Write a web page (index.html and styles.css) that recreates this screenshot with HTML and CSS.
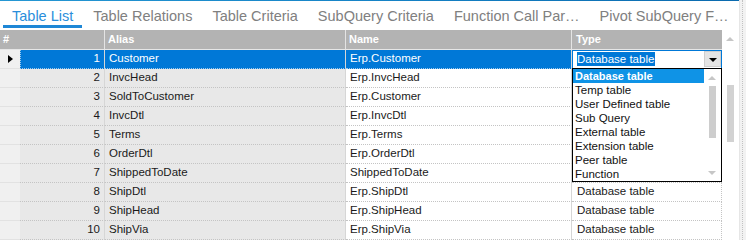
FILE: index.html
```html
<!DOCTYPE html>
<html>
<head>
<meta charset="utf-8">
<link rel="stylesheet" href="styles.css">
</head>
<body>
<div class="app">
  <div class="main">
    <div class="topbar"></div>
    <nav class="tabs">
      <span class="tab active">Table List</span>
      <span class="tab">Table Relations</span>
      <span class="tab">Table Criteria</span>
      <span class="tab">SubQuery Criteria</span>
      <span class="tab">Function Call Par…</span>
      <span class="tab">Pivot SubQuery F…</span>
    </nav>
    <div class="gridwrap">
      <div class="grid">
        <div class="hdr">
          <div class="h hash">#</div>
          <div class="h alias">Alias</div>
          <div class="h name">Name</div>
          <div class="h type">Type</div>
        </div>

        <div class="row selected">
          <div class="c sel"><span class="arrow"></span></div>
          <div class="c num">1</div>
          <div class="c alias">Customer</div>
          <div class="c name">Erp.Customer</div>
          <div class="c type edit">
            <div class="combo">
              <span class="combo-text"><span class="hl">Database table</span></span>
              <span class="combo-btn"><span class="tri"></span></span>
            </div>
            <div class="dropdown">
              <ul class="items">
                <li class="item on">Database table</li>
                <li class="item">Temp table</li>
                <li class="item">User Defined table</li>
                <li class="item">Sub Query</li>
                <li class="item">External table</li>
                <li class="item">Extension table</li>
                <li class="item">Peer table</li>
                <li class="item">Function</li>
              </ul>
              <div class="dd-scroll">
                <span class="up"></span>
                <span class="thumb"></span>
                <span class="down"></span>
              </div>
            </div>
          </div>
        </div>
        <div class="row">
          <div class="c sel"></div><div class="c num">2</div><div class="c alias">InvcHead</div><div class="c name">Erp.InvcHead</div><div class="c type"></div>
        </div>
        <div class="row">
          <div class="c sel"></div><div class="c num">3</div><div class="c alias">SoldToCustomer</div><div class="c name">Erp.Customer</div><div class="c type"></div>
        </div>
        <div class="row">
          <div class="c sel"></div><div class="c num">4</div><div class="c alias">InvcDtl</div><div class="c name">Erp.InvcDtl</div><div class="c type"></div>
        </div>
        <div class="row">
          <div class="c sel"></div><div class="c num">5</div><div class="c alias">Terms</div><div class="c name">Erp.Terms</div><div class="c type"></div>
        </div>
        <div class="row">
          <div class="c sel"></div><div class="c num">6</div><div class="c alias">OrderDtl</div><div class="c name">Erp.OrderDtl</div><div class="c type"></div>
        </div>
        <div class="row">
          <div class="c sel"></div><div class="c num">7</div><div class="c alias">ShippedToDate</div><div class="c name">ShippedToDate</div><div class="c type"></div>
        </div>
        <div class="row">
          <div class="c sel"></div><div class="c num">8</div><div class="c alias">ShipDtl</div><div class="c name">Erp.ShipDtl</div><div class="c type">Database table</div>
        </div>
        <div class="row">
          <div class="c sel"></div><div class="c num">9</div><div class="c alias">ShipHead</div><div class="c name">Erp.ShipHead</div><div class="c type">Database table</div>
        </div>
        <div class="row">
          <div class="c sel"></div><div class="c num">10</div><div class="c alias">ShipVia</div><div class="c name">Erp.ShipVia</div><div class="c type">Database table</div>
        </div>
      </div>
      <div class="vscroll">
        <span class="up"></span>
        <span class="thumb"></span>
      </div>
    </div>
  </div>
  <div class="edge"><span class="edge-line"></span></div>
</div>
</body>
</html>
```
FILE: styles.css
```css
* { box-sizing: border-box; }
html, body { margin: 0; padding: 0; background: #fff; }
body {
  width: 746px;
  height: 240px;
  overflow: hidden;
  font-family: "Liberation Sans", Arial, sans-serif;
  font-size: 11.5px;
  color: #1a1a1a;
}
.app { display: flex; height: 240px; }
.main { width: 739px; display: flex; flex-direction: column; }
.topbar {
  height: 3px;
  background: linear-gradient(90deg, #2597d3 0%, #1683c6 50%, #0a6aae 100%);
}
.tabs {
  display: flex;
  padding-left: 3px;
  margin-bottom: 2px;
}
.tab {
  font-size: 14.5px;
  line-height: 17px;
  color: #808080;
  padding: 7px 9px 0;
  border-bottom: 3px solid transparent;
  margin-right: 2px;
  white-space: nowrap;
}
.tab.active { color: #2a8edb; border-bottom-color: #1e87d6; }

.gridwrap { display: flex; flex: 1; }
.grid { width: 722px; display: flex; flex-direction: column; }

.hdr {
  display: flex;
  height: 20px;
  background: #b3b3b3;
  border-bottom: 1px solid #e6e6e6;
  color: #fff;
  font-weight: bold;
  font-size: 11px;
  line-height: 19px;
}
.h { border-right: 1px solid #e4e4e4; padding-left: 3px; }
.h.hash { width: 105px; }
.h.alias { width: 241px; padding-left: 3px; }
.h.name { width: 226px; padding-left: 3px; }
.h.type { width: 150px; border-right: none; padding-left: 4px; }

.row { display: flex; height: 19px; }
.c {
  height: 19px;
  line-height: 16px;
  white-space: nowrap;
  border-bottom: 1px dotted #c4c4c4;
}
.c.sel {
  width: 20px;
  background: #f0f0f0;
  border-bottom: 1px solid #e2e2e2;
  position: relative;
}
.c.num {
  width: 85px;
  background: #e8e8e8;
  text-align: right;
  padding-right: 4px;
  border-right: 1px solid #d6d6d6;
}
.c.alias {
  width: 241px;
  background: #e8e8e8;
  padding-left: 4px;
  border-right: 1px solid #d6d6d6;
}
.c.name {
  width: 226px;
  background: #fff;
  padding-left: 4px;
  border-right: 1px solid #d6d6d6;
}
.c.type {
  width: 150px;
  padding-left: 5px;
  border-right: 1px dotted #c4c4c4;
}
.row.selected .c.num,
.row.selected .c.alias,
.row.selected .c.name {
  background: #0078d7;
  color: #fff;
  border-bottom: 1px dotted #9cc9ee;
}
.row.selected .c.num { border-left: 1px dotted #9cc9ee; }
.arrow {
  position: absolute;
  left: 8px;
  top: 5px;
  width: 0; height: 0;
  border-top: 4px solid transparent;
  border-bottom: 4px solid transparent;
  border-left: 5px solid #000;
}

.c.type.edit {
  padding: 0;
  border: none;
  position: relative;
}
.combo {
  display: flex;
  height: 19px;
  border: 1px solid #0078d7;
  background: #fff;
  padding: 0 0 1px 0;
}
.combo-text { flex: 1; padding-left: 4px; padding-top: 1px; line-height: 14px; }
.hl { background: #0078d7; color: #fff; display: inline-block; padding: 0 1px 0 0; }
.combo-btn {
  width: 17px;
  height: 16px;
  background: #e4e4e4;
  border: 1px solid #cfcfcf;
  position: relative;
}
.tri {
  position: absolute;
  left: 4px; top: 6px;
  width: 0; height: 0;
  border-left: 4px solid transparent;
  border-right: 4px solid transparent;
  border-top: 4px solid #000;
}

.dropdown {
  position: absolute;
  top: 18px;
  left: 0;
  width: 150px;
  height: 114px;
  border: 1px solid #000;
  background: #fff;
  display: flex;
  z-index: 5;
}
.items { list-style: none; margin: 0; padding: 0; flex: 1; }
.item { height: 14px; line-height: 14px; padding-left: 2px; color: #111; }
.item.on { background: #0f93e6; color: #fff; font-weight: bold; font-size: 11px; }
.dd-scroll {
  width: 17px;
  position: relative;
}
.dd-scroll .up, .vscroll .up {
  position: absolute;
  width: 0; height: 0;
  border-left: 4px solid transparent;
  border-right: 4px solid transparent;
  border-bottom: 4px solid #c6c6c6;
}
.dd-scroll .up { left: 4px; top: 7px; }
.dd-scroll .down {
  position: absolute;
  left: 4px; top: 102px;
  width: 0; height: 0;
  border-left: 4px solid transparent;
  border-right: 4px solid transparent;
  border-top: 4px solid #c6c6c6;
}
.dd-scroll .thumb {
  position: absolute;
  left: 5px; top: 17px;
  width: 7px; height: 52px;
  background: #cdcdcd;
}

.vscroll { width: 17px; position: relative; }
.vscroll .up { left: 4px; top: 7px; }
.vscroll .thumb {
  position: absolute;
  left: 5px; top: 55px;
  width: 7px; height: 57px;
  background: #d2d2d2;
}

.edge {
  width: 7px;
  background: #f2f2f2;
  border-left: 1px solid #e6e6e6;
  position: relative;
}
.edge-line {
  position: absolute;
  left: 2px; top: 0; bottom: 0;
  border-left: 1px dotted #c2c2c2;
}
```
